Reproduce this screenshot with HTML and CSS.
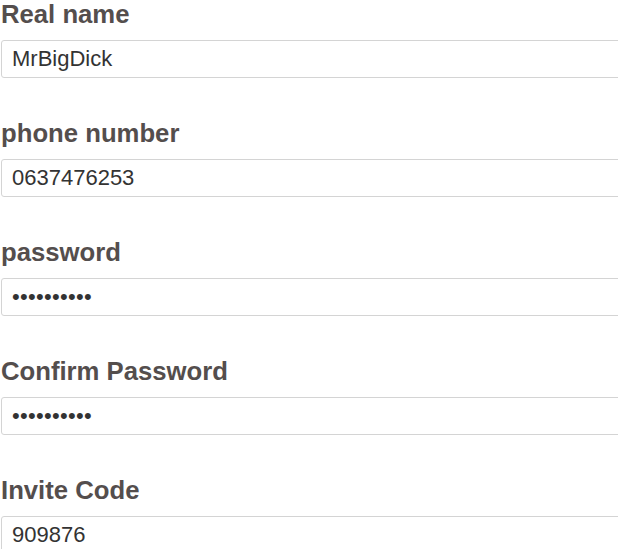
FILE: index.html
```html
<!DOCTYPE html>
<html>
<head>
<meta charset="utf-8">
<link rel="stylesheet" href="styles.css">
</head>
<body>
<form class="form">
  <div class="field">
    <label class="label">Real name</label>
    <input class="input" type="text" value="MrBigDick">
  </div>
  <div class="field">
    <label class="label">phone number</label>
    <input class="input" type="text" value="0637476253">
  </div>
  <div class="field">
    <label class="label">password</label>
    <input class="input input-secret" type="password" value="1234567890">
  </div>
  <div class="field">
    <label class="label">Confirm Password</label>
    <input class="input input-secret" type="password" value="1234567890">
  </div>
  <div class="field">
    <label class="label">Invite Code</label>
    <input class="input" type="text" value="909876">
  </div>
</form>
</body>
</html>
```
FILE: styles.css
```css
html, body {
  margin: 0;
  padding: 0;
  overflow: hidden;
  background: #fff;
}
.form {
  padding-left: 1px;
  width: 700px;
  font-family: "Liberation Sans", Arial, sans-serif;
}
.field {
  margin-bottom: 41px;
}
.label {
  display: block;
  font-size: 25.7px;
  line-height: 28px;
  font-weight: bold;
  color: #544e4d;
  margin-bottom: 12px;
}
.input {
  display: block;
  box-sizing: border-box;
  width: 100%;
  height: 38px;
  margin: 0;
  padding: 0 10px;
  border: 1px solid #d4d4d4;
  border-radius: 3px;
  font-family: "Liberation Sans", Arial, sans-serif;
  font-size: 22px;
  color: #333;
  background: #fff;
  outline: none;
}
.input-secret {
  letter-spacing: 0.3px;
}
```
